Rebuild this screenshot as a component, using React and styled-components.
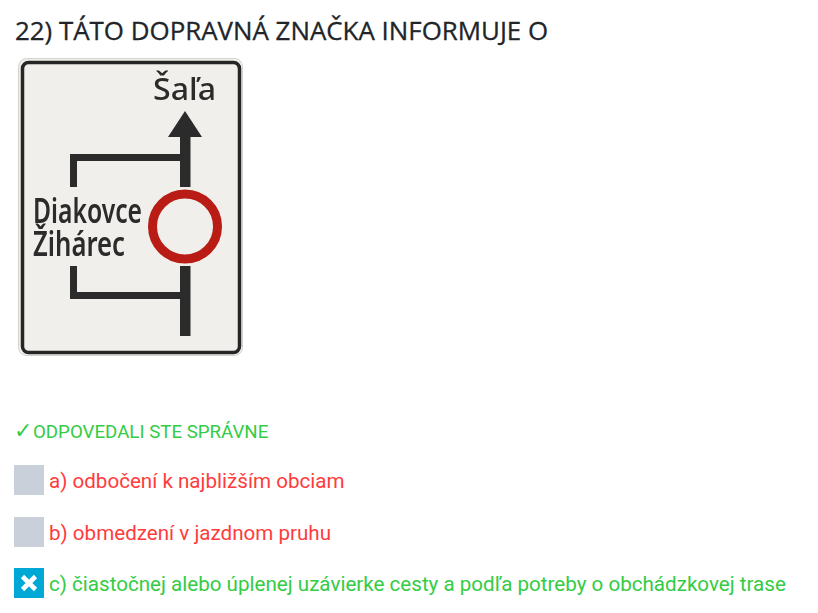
import React from 'react';
import styled, { createGlobalStyle } from 'styled-components';

const GlobalStyle = createGlobalStyle`
  html, body {
    margin: 0;
    padding: 0;
    background: #fff;
  }
`;

const Page = styled.div`
  width: 818px;
  height: 613px;
  overflow: hidden;
  padding: 0 0 0 14px;
  box-sizing: border-box;
`;

const Question = styled.h2`
  margin: 0;
  padding: 13px 0 0 1px;
  font-family: "Open Sans", sans-serif;
  font-size: 25.9px;
  line-height: 34px;
  font-weight: 500;
  -webkit-text-stroke: 0.3px #212529;
  color: #212529;
  white-space: nowrap;
`;

const SignFrame = styled.div`
  width: 226px;
  height: 299px;
  margin: 11px 0 0 4px;
  filter: blur(0.45px);
`;

const Verdict = styled.div`
  margin-top: 63px;
  font-family: Roboto, sans-serif;
  font-size: 18.7px;
  line-height: 22px;
  color: #33cc44;
  white-space: nowrap;
`;

const Check = styled.span`
  font-size: 22px;
  margin-right: 1px;
`;

const Answers = styled.div`
  margin-top: 22px;
  display: flex;
  flex-direction: column;
  gap: 21.5px;
`;

const Answer = styled.div`
  display: flex;
  align-items: center;
  gap: 5px;
  height: 30px;
  font-family: Roboto, sans-serif;
  font-size: 20.6px;
  color: ${({ correct }) => (correct ? '#33cc44' : '#ff3b3b')};
  white-space: nowrap;
`;

const AnswerText = styled.span`
  padding-top: 2px;
`;

const Box = styled.span`
  flex: none;
  width: 30px;
  height: 30px;
  display: flex;
  align-items: center;
  justify-content: center;
  background: ${({ checked }) => (checked ? '#00a8d6' : '#c9d0da')};
`;

const SignLabel = styled.text`
  font-family: "Noto Sans", sans-serif;
  font-size: ${({ size }) => size}px;
  font-weight: ${({ heavy }) => (heavy ? 600 : 500)};
  fill: #2b2b2b;
`;

const Sign = () => (
  <svg width="226" height="299" viewBox="18 58 226 299">
    <rect x="18.5" y="58.5" width="224" height="297" rx="8" fill="#f0efeb" stroke="#d2d2cf" />
    <rect x="22.5" y="62.5" width="217" height="290" rx="6" fill="none" stroke="#262626" strokeWidth="3.5" />
    <SignLabel size={31} x="153" y="100" textLength="63" lengthAdjust="spacingAndGlyphs">Šaľa</SignLabel>
    <path d="M185 111 L202 137 L190.5 137 L190.5 187 L180 187 L180 137 L168 137 Z" fill="#2b2b2b" />
    <path d="M70 187 V154 H180 V161 H77 V187 Z" fill="#2b2b2b" />
    <path d="M180 266 H190.5 V336 H180 V299 H70 V266 H77 V292 H180 Z" fill="#2b2b2b" />
    <circle cx="185" cy="226.5" r="32.5" fill="none" stroke="#b81c14" strokeWidth="9" />
    <SignLabel size={34} heavy x="33" y="223" textLength="109" lengthAdjust="spacingAndGlyphs">Diakovce</SignLabel>
    <SignLabel size={34} heavy x="33" y="256" textLength="92" lengthAdjust="spacingAndGlyphs">Žihárec</SignLabel>
  </svg>
);

const CrossMark = () => (
  <svg width="20" height="20" viewBox="0 0 20 20">
    <path d="M3.5 3.5 L16.5 16.5 M16.5 3.5 L3.5 16.5" stroke="#fff" strokeWidth="4.6" />
  </svg>
);

const answers = [
  { id: 'a', text: 'a) odbočení k najbližším obciam' },
  { id: 'b', text: 'b) obmedzení v jazdnom pruhu' },
  { id: 'c', text: 'c) čiastočnej alebo úplenej uzávierke cesty a podľa potreby o obchádzkovej trase', correct: true, checked: true },
];

export default function App() {
  return (
    <Page>
      <GlobalStyle />
      <Question>22) TÁTO DOPRAVNÁ ZNAČKA INFORMUJE O</Question>
      <SignFrame>
        <Sign />
      </SignFrame>
      <Verdict><Check>✓</Check>ODPOVEDALI STE SPRÁVNE</Verdict>
      <Answers>
        {answers.map((a) => (
          <Answer key={a.id} correct={a.correct}>
            <Box checked={a.checked}>{a.checked && <CrossMark />}</Box>
            <AnswerText>{a.text}</AnswerText>
          </Answer>
        ))}
      </Answers>
    </Page>
  );
}
